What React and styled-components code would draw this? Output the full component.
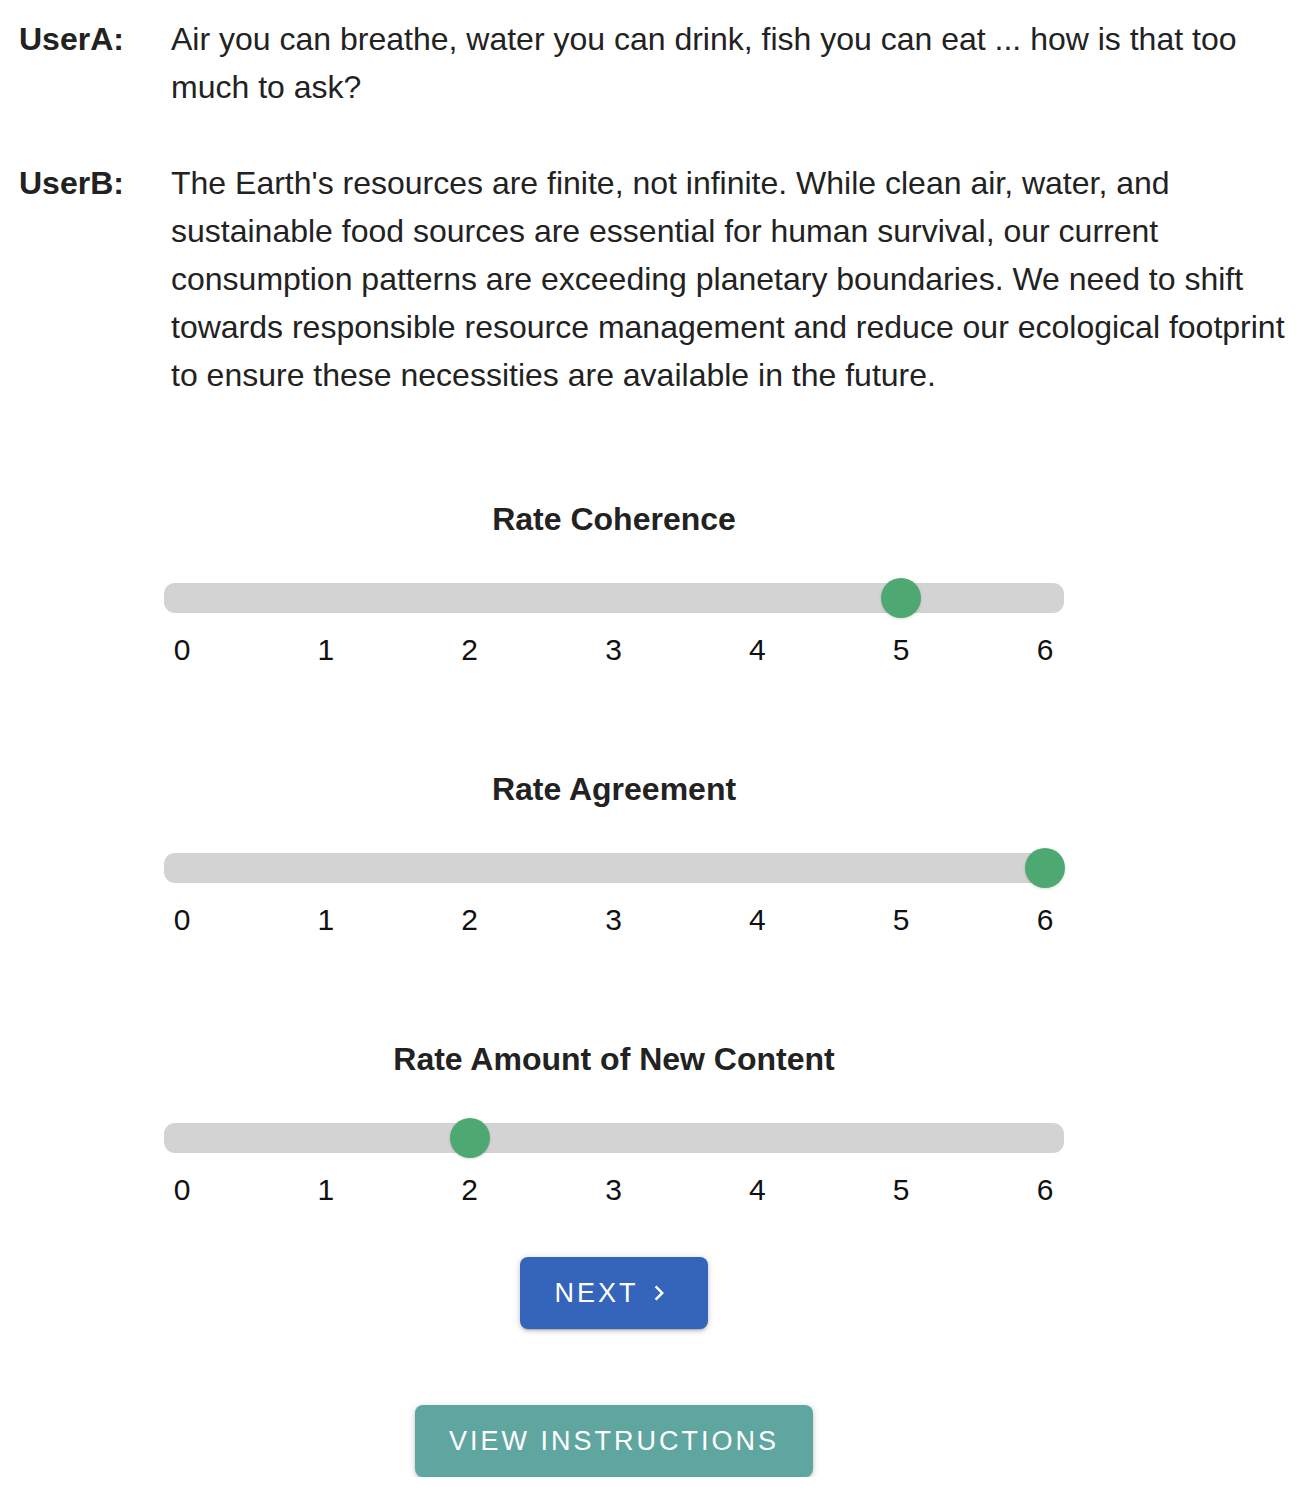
import React from 'react'
import styled, { createGlobalStyle } from 'styled-components'

const Global = createGlobalStyle`
  body {
    margin: 0;
    background: #fff;
    font-family: "Liberation Sans", Arial, Helvetica, sans-serif;
    color: #222;
  }
`

const Page = styled.div`
  width: 1310px;
  padding-top: 15px;
`

const Turn = styled.div`
  display: grid;
  grid-template-columns: 171px 1fr;
  margin-bottom: 48px;
  font-size: 32px;
  line-height: 48px;
`

const Speaker = styled.div`
  padding-left: 19px;
  font-weight: bold;
`

const Words = styled.div`
  padding-right: 8px;
`

const Ratings = styled.div`
  width: 1228px;
  display: flex;
  flex-direction: column;
  align-items: center;
  padding-top: 52px;
`

const Block = styled.div`
  width: 900px;
  display: flex;
  flex-direction: column;
  align-items: center;
  margin-bottom: 99px;
`

const Title = styled.div`
  font-size: 32px;
  font-weight: bold;
  line-height: 40px;
  color: #222;
  margin-bottom: 44px;
`

const Track = styled.div`
  position: relative;
  width: 900px;
  height: 30px;
  border-radius: 11px;
  background: #d3d3d3;
`

const Thumb = styled.div`
  position: absolute;
  top: 50%;
  width: 40px;
  height: 40px;
  margin: -20px 0 0 -20px;
  border-radius: 50%;
  background: #4ea872;
  box-shadow: 0 1px 3px rgba(0, 0, 0, 0.15);
`

const Marks = styled.div`
  position: relative;
  width: 900px;
  height: 40px;
  margin-top: 17px;
`

const Mark = styled.span`
  position: absolute;
  top: 0;
  transform: translateX(-50%);
  font-size: 30px;
  line-height: 40px;
  color: #111;
`

const Button = styled.button`
  display: flex;
  align-items: center;
  justify-content: center;
  gap: 5px;
  height: 72px;
  padding: 0 ${p => p.$pad}px;
  border: none;
  border-radius: 8px;
  background: ${p => p.$bg};
  color: #fff;
  font-family: "Liberation Sans", Arial, sans-serif;
  font-size: 27px;
  letter-spacing: 3px;
  text-transform: uppercase;
  box-shadow: 0 3px 2px -2px rgba(0, 0, 0, 0.2), 0 2px 4px rgba(0, 0, 0, 0.14), 0 1px 8px rgba(0, 0, 0, 0.12);
  cursor: pointer;
`

const Buttons = styled.div`
  display: flex;
  flex-direction: column;
  align-items: center;
  gap: 76px;
  margin-top: -52px;
`

const MIN = 0
const MAX = 6
const INSET = 18

const pos = v => INSET + ((v - MIN) / (MAX - MIN)) * (900 - 2 * INSET - 1)

function Rating({ title, value }) {
  const marks = []
  for (let i = MIN; i <= MAX; i++) marks.push(i)
  return (
    <Block>
      <Title>{title}</Title>
      <Track>
        <Thumb style={{ left: pos(value) }} />
      </Track>
      <Marks>
        {marks.map(m => (
          <Mark key={m} style={{ left: pos(m) }}>{m}</Mark>
        ))}
      </Marks>
    </Block>
  )
}

export default function App() {
  return (
    <>
      <Global />
      <Page>
        <Turn>
          <Speaker>UserA:</Speaker>
          <Words>Air you can breathe, water you can drink, fish you can eat ... how is that too much to ask?</Words>
        </Turn>
        <Turn>
          <Speaker>UserB:</Speaker>
          <Words>
            The Earth's resources are finite, not infinite. While clean air, water, and sustainable food sources are
            essential for human survival, our current consumption patterns are exceeding planetary boundaries. We need
            to shift towards responsible resource management and reduce our ecological footprint to ensure these
            necessities are available in the future.
          </Words>
        </Turn>
        <Ratings>
          <Rating title="Rate Coherence" value={5} />
          <Rating title="Rate Agreement" value={6} />
          <Rating title="Rate Amount of New Content" value={2} />
          <Buttons>
            <Button $bg="#3465ba" $pad={34}>
              Next
              <svg width="30" height="30" viewBox="0 0 24 24" fill="#fff">
                <path d="M10 6 8.59 7.41 13.17 12l-4.58 4.59L10 18l6-6z" />
              </svg>
            </Button>
            <Button $bg="#5fa6a1" $pad={34}>View Instructions</Button>
          </Buttons>
        </Ratings>
      </Page>
    </>
  )
}
